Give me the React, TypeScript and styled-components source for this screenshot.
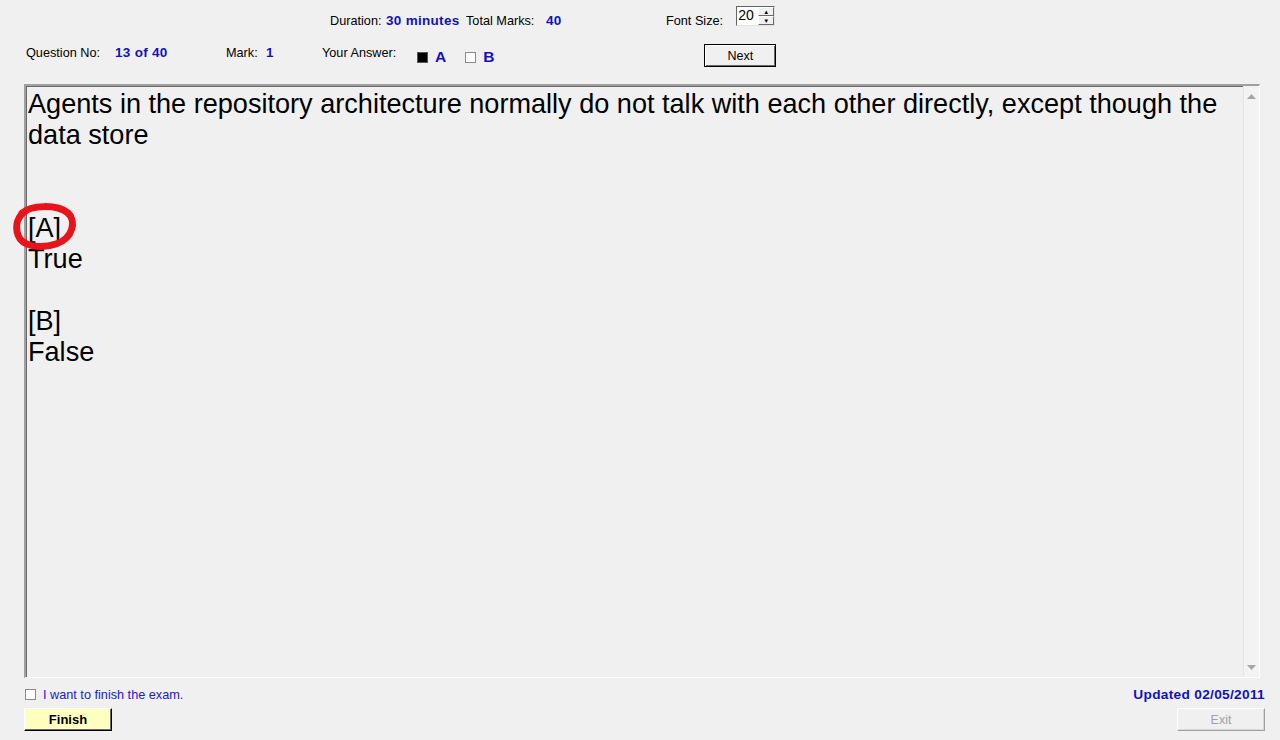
import React from "react";
import styled, { createGlobalStyle } from "styled-components";

const Global = createGlobalStyle`
  html, body { margin: 0; padding: 0; background: #f0f0f0; }
  body { font-family: "Liberation Sans", Arial, sans-serif; font-size: 12.7px; color: #000; }
  #root { width: 1280px; height: 740px; overflow: hidden; }
`;

const Page = styled.div`
  width: 1280px;
  height: 740px;
  background: #f0f0f0;
  display: flex;
  flex-direction: column;
`;

const TopRow = styled.div`
  box-sizing: border-box;
  padding: 6px 0 0 330px;
  display: flex;
  align-items: flex-end;
  height: 28px;
`;

const Label = styled.span<{ $w?: number }>`
  font-size: 12.7px;
  line-height: 14px;
  white-space: nowrap;
  color: #000;
  ${(p) => (p.$w ? `width: ${p.$w}px;` : "")}
  flex: none;
`;

const Value = styled.span<{ $w?: number }>`
  font-size: 13.5px;
  letter-spacing: 0.3px;
  line-height: 14px;
  font-weight: bold;
  color: #1010c8;
  white-space: nowrap;
  ${(p) => (p.$w ? `width: ${p.$w}px;` : "")}
  flex: none;
`;

const Spin = styled.div`
  margin-left: 13px;
  width: 39px;
  height: 20px;
  box-sizing: border-box;
  border-top: 1px solid #646464;
  border-left: 1px solid #646464;
  border-right: 1px solid #e3e3e3;
  border-bottom: 1px solid #e3e3e3;
  background: #fff;
  display: flex;
  align-self: flex-start;
`;

const SpinValue = styled.div`
  flex: 1;
  font-size: 14px;
  line-height: 17px;
  padding-left: 1px;
`;

const SpinButtons = styled.div`
  width: 16px;
  display: flex;
  flex-direction: column;
`;

const SpinBtn = styled.div`
  flex: 1;
  background: #f0f0f0;
  border: 1px solid;
  border-color: #fff #696969 #696969 #fff;
  box-sizing: border-box;
  display: flex;
  align-items: center;
  justify-content: center;
  font-size: 6px;
  line-height: 6px;
  color: #000;
`;

const SecondRow = styled.div`
  height: 56px;
  box-sizing: border-box;
  padding: 17px 0 0 26px;
  display: flex;
  align-items: flex-start;
`;

const RowLabel = styled(Label)`
  margin-top: 1px;
`;

const RowValue = styled(Value)`
  margin-top: 1px;
`;

const CheckGroup = styled.div<{ $gap?: number }>`
  display: flex;
  align-items: center;
  margin-top: 3px;
  margin-left: ${(p) => p.$gap || 0}px;
  flex: none;
`;

const Box = styled.span<{ $checked?: boolean }>`
  width: 11px;
  height: 11px;
  box-sizing: border-box;
  border: 1px solid ${(p) => (p.$checked ? "#555" : "#8a8a8a")};
  background: ${(p) => (p.$checked ? "#000" : "#fff")};
  display: inline-block;
  flex: none;
`;

const Letter = styled.span`
  font-size: 15.5px;
  font-weight: bold;
  color: #1010c8;
  margin-left: 7px;
  line-height: 18px;
`;

const WinButton = styled.button<{ $bg?: string; $disabled?: boolean; $bold?: boolean; $w: number }>`
  width: ${(p) => p.$w}px;
  height: 23px;
  box-sizing: border-box;
  padding: 0;
  margin: 0;
  font-family: "Liberation Sans", Arial, sans-serif;
  font-size: ${(p) => (p.$bold ? "13px" : "12.5px")};
  font-weight: ${(p) => (p.$bold ? "bold" : "normal")};
  color: ${(p) => (p.$disabled ? "#a0a0a0" : "#000")};
  background: ${(p) => p.$bg || "#f0f0f0"};
  border: 1px solid;
  border-color: ${(p) => (p.$disabled ? "#fff #a0a0a0 #a0a0a0 #fff" : "#fff #000 #000 #fff")};
  box-shadow: ${(p) => (p.$disabled ? "inset -1px -1px 0 #d8d8d8" : "inset -1px -1px 0 #696969")};
  cursor: default;
`;

const NextButton = styled(WinButton)`
  margin-top: -4px;
  border: 1px solid #000;
  box-shadow: inset 1px 1px 0 #fff, inset -1px -1px 0 #696969;
`;

const QuestionArea = styled.div`
  position: relative;
  margin-left: 24px;
  width: 1236px;
  height: 594px;
  box-sizing: border-box;
  border-top: 2px solid;
  border-left: 2px solid;
  border-color: #a0a0a0;
  border-right: 1px solid #fff;
  border-bottom: 1px solid #fff;
  box-shadow: inset 1px 1px 0 #696969;
  display: flex;
`;

const QuestionText = styled.div`
  flex: 1;
  padding: 2px 20px 0 2px;
  font-family: "Liberation Sans", Arial, sans-serif;
  font-size: 27.1px;
  line-height: 31px;
  color: #000;
  white-space: pre-wrap;
`;

const Scrollbar = styled.div`
  width: 16px;
  border-left: 1px solid #e6e6e6;
  background: #f3f3f3;
  display: flex;
  flex-direction: column;
  justify-content: space-between;
  align-items: center;
  padding: 8px 0 7px;
  box-sizing: border-box;
`;

const Annotation = styled.svg`
  position: absolute;
  left: -13px;
  top: 116px;
  overflow: visible;
  pointer-events: none;
`;

const BottomArea = styled.div`
  display: flex;
  justify-content: space-between;
  padding: 10px 15px 0 24px;
`;

const Col = styled.div<{ $end?: boolean }>`
  display: flex;
  flex-direction: column;
  align-items: ${(p) => (p.$end ? "flex-end" : "flex-start")};
  gap: 7px;
`;

const FinishLine = styled.div`
  display: flex;
  align-items: center;
  height: 13px;
`;

const FinishLabel = styled.span`
  margin-left: 7px;
  font-size: 12.7px;
  color: #2020d0;
  line-height: 14px;
`;

const Updated = styled.span`
  font-size: 13.7px;
  letter-spacing: 0.3px;
  font-weight: bold;
  color: #1010c8;
  line-height: 14px;
  height: 13px;
`;

const FinishBox = styled.span`
  width: 11px;
  height: 11px;
  margin-left: 1px;
  box-sizing: border-box;
  border: 1px solid #8a8a8a;
  background: #fff;
`;

export default function App() {
  const question =
    "Agents in the repository architecture normally do not talk with each other directly, except though the data store\n\n\n[A]\nTrue\n\n[B]\nFalse";
  return (
    <Page>
      <Global />
      <TopRow>
        <Label $w={56}>Duration:</Label>
        <Value $w={80}>30 minutes</Value>
        <Label $w={80}>Total Marks:</Label>
        <Value $w={120}>40</Value>
        <Label>Font Size:</Label>
        <Spin>
          <SpinValue>20</SpinValue>
          <SpinButtons>
            <SpinBtn>▲</SpinBtn>
            <SpinBtn>▼</SpinBtn>
          </SpinButtons>
        </Spin>
      </TopRow>
      <SecondRow>
        <RowLabel $w={89}>Question No:</RowLabel>
        <RowValue $w={111}>13 of 40</RowValue>
        <RowLabel $w={40}>Mark:</RowLabel>
        <RowValue $w={56}>1</RowValue>
        <RowLabel $w={95}>Your Answer:</RowLabel>
        <CheckGroup>
          <Box $checked />
          <Letter>A</Letter>
        </CheckGroup>
        <CheckGroup $gap={19}>
          <Box />
          <Letter>B</Letter>
        </CheckGroup>
        <CheckGroup $gap={210}>
          <NextButton $w={72}>Next</NextButton>
        </CheckGroup>
      </SecondRow>
      <QuestionArea>
        <QuestionText>{question}</QuestionText>
        <Scrollbar>
          <svg width="9" height="5" viewBox="0 0 9 5">
            <polygon points="0,5 9,5 4.5,0" fill="#a6a6a6" />
          </svg>
          <svg width="9" height="5" viewBox="0 0 9 5">
            <polygon points="0,0 9,0 4.5,5" fill="#a6a6a6" />
          </svg>
        </Scrollbar>
        <Annotation width="66" height="50" viewBox="0 0 66 50">
          <path
            d="M9 11 C 18 3, 44 2, 55 11 C 63 18, 61 36, 43 42 C 28 47, 9 45, 5 33 C 2 24, 4 14, 14 8"
            fill="none"
            stroke="#e8141c"
            strokeWidth="7"
            strokeLinecap="round"
            strokeLinejoin="round"
          />
        </Annotation>
      </QuestionArea>
      <BottomArea>
        <Col>
          <FinishLine>
            <FinishBox />
            <FinishLabel>I want to finish the exam.</FinishLabel>
          </FinishLine>
          <WinButton $w={88} $bg="#ffffc0" $bold>
            Finish
          </WinButton>
        </Col>
        <Col $end>
          <Updated>Updated 02/05/2011</Updated>
          <WinButton $w={88} $disabled>
            Exit
          </WinButton>
        </Col>
      </BottomArea>
    </Page>
  );
}
